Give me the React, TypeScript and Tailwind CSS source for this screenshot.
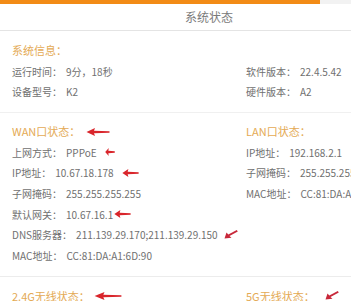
const font = { fontFamily: '"Noto Sans CJK SC", "Noto Sans", sans-serif' };

function ArrowLeft({ w = 24, className = "" }: { w?: number; className?: string }) {
  return (
    <svg width={w} height="8" viewBox="0 0 24 8" preserveAspectRatio="none" className={className}>
      <path d="M0.5 4 L9 0 L8 2.8 L23.5 3.2 L23.5 4.8 L8 5.2 L9 8 Z" fill="#d9252b" />
    </svg>
  );
}

function ArrowDiag({ className = "" }: { className?: string }) {
  return (
    <svg width="14" height="9" viewBox="0 0 14 9" className={className}>
      <path d="M0.5 8.5 L2.5 2.5 L4.3 4.6 L12.8 0 L13.8 1.5 L5.5 6 L7.5 7.8 Z" fill="#c8283a" />
    </svg>
  );
}

function Heading({ children }: { children: React.ReactNode }) {
  return <span className="text-[11px] text-[#e4aa55]">{children}</span>;
}

function Row({ label, value, children }: { label: string; value: string; children?: React.ReactNode }) {
  return (
    <div className="flex h-[20.67px] items-center whitespace-nowrap text-[10px] text-[#707070]">
      <span>{label}：</span>
      <span className="ml-[4px]">{value}</span>
      {children}
    </div>
  );
}

export default function App() {
  return (
    <div className="h-[301px] w-[351px] overflow-hidden bg-white" style={font}>
      <div className="flex h-[4px]">
        <div className="w-[320px] bg-[#f28b16]" />
        <div className="flex-1 bg-[#f2f2f2]" />
      </div>
      <div className="flex h-[27px] items-center border-b border-[#e4e4e4] pl-[185px] text-[12px] text-[#7a7a7a]">
        系统状态
      </div>

      <div className="border-b border-[#f0f0f0] pb-[10px] pl-[12px] pt-[8px]">
        <div className="flex h-[22px] items-center">
          <Heading>系统信息：</Heading>
        </div>
        <div className="grid grid-cols-[234px_1fr]">
          <div>
            <Row label="运行时间" value="9分，18秒" />
            <Row label="设备型号" value="K2" />
          </div>
          <div>
            <Row label="软件版本" value="22.4.5.42" />
            <Row label="硬件版本" value="A2" />
          </div>
        </div>
      </div>

      <div className="grid grid-cols-[234px_1fr] border-b border-[#ececec] pb-[10px] pl-[12px] pt-[8px]">
        <div>
          <div className="flex h-[20.67px] items-center">
            <Heading>WAN口状态：</Heading>
            <ArrowLeft className="ml-[6px]" />
          </div>
          <Row label="上网方式" value="PPPoE">
            <ArrowLeft w={10} className="ml-[8px]" />
          </Row>
          <Row label="IP地址" value="10.67.18.178">
            <ArrowLeft w={17} className="ml-[8px]" />
          </Row>
          <Row label="子网掩码" value="255.255.255.255" />
          <Row label="默认网关" value="10.67.16.1">
            <ArrowLeft w={17} className="ml-[1px]" />
          </Row>
          <Row label="DNS服务器" value="211.139.29.170;211.139.29.150">
            <ArrowDiag className="ml-[6px]" />
          </Row>
          <Row label="MAC地址" value="CC:81:DA:A1:6D:90" />
        </div>
        <div>
          <div className="flex h-[20.67px] items-center">
            <Heading>LAN口状态：</Heading>
          </div>
          <Row label="IP地址" value="192.168.2.1" />
          <Row label="子网掩码" value="255.255.255.255" />
          <Row label="MAC地址" value="CC:81:DA:A1:6D:90" />
        </div>
      </div>

      <div className="grid grid-cols-[234px_1fr] pl-[12px] pt-[9px]">
        <div className="flex h-[20px] items-center">
          <Heading>2.4G无线状态：</Heading>
          <ArrowLeft w={28} className="ml-[4px]" />
        </div>
        <div className="flex h-[20px] items-center whitespace-nowrap">
          <Heading>5G无线状态：</Heading>
          <ArrowDiag className="ml-[10px]" />
        </div>
      </div>
    </div>
  );
}
